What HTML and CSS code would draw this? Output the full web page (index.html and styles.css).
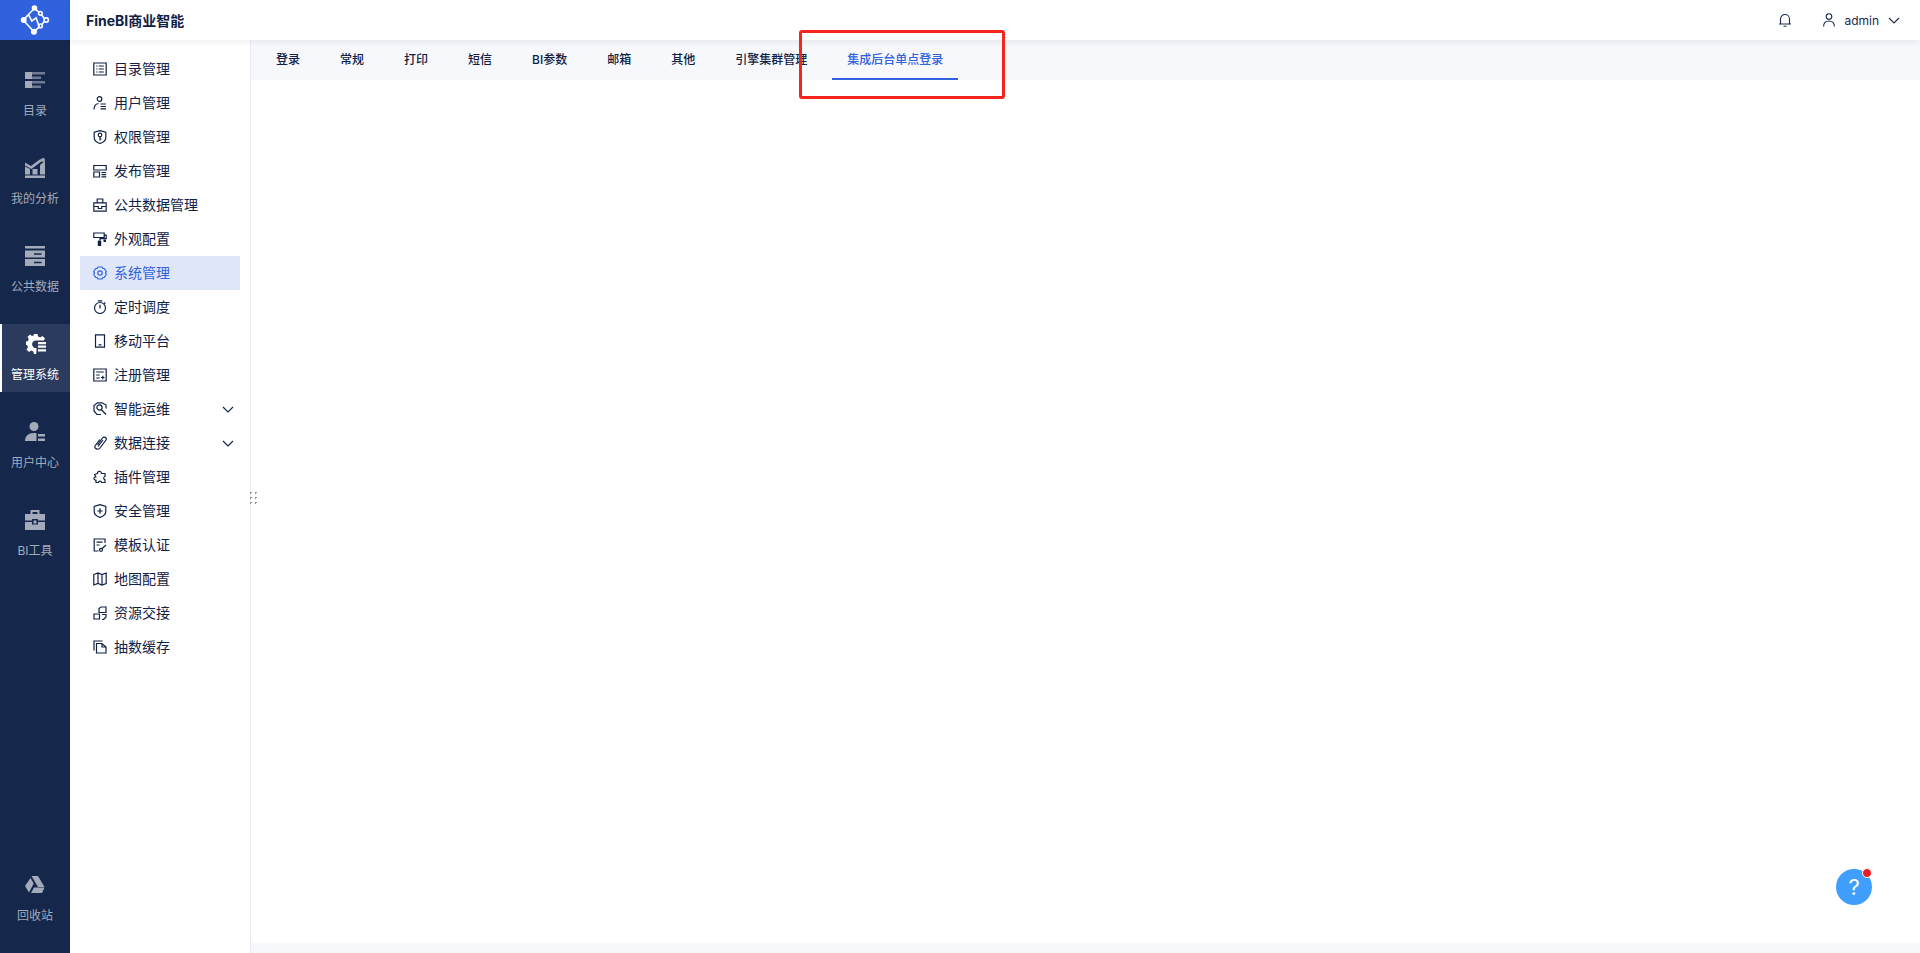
FILE: index.html
```html
<!DOCTYPE html>
<html>
<head>
  <title>FineBI商业智能</title>
  <link rel="stylesheet" href="styles.css">
</head>
<body>
  <div class="rail">
    <div class="logo">
      <svg width="30" height="30" viewBox="0 0 28 28" fill="none" stroke="#fff" stroke-width="1.500">
        <path d="M3 14L13.500 3M3 14L13 25M13.500 3L18 7M3 14L8 9M13 25L18 20.500M8 9L11 15L15 12L18 20.500M20 9L23 13M20 19L23 15"/>
        <circle cx="3.500" cy="14" r="2.800" fill="#fff" stroke="none"/>
        <circle cx="13.500" cy="2.800" r="2.600" fill="#fff" stroke="none"/>
        <circle cx="13" cy="25" r="2.800" fill="#fff" stroke="none"/>
        <circle cx="24.500" cy="14" r="2"/>
        <circle cx="19" cy="7.800" r="1.700"/>
        <circle cx="19" cy="19.500" r="1.700"/>
      </svg>
    </div>
    <div class="rail-item">
      <svg class="rail-icon" viewBox="0 0 20 20"><path d="M0 2h7v7H0zM0 11h7v7H0z"/><path class="dim" d="M7 2h13v2.500H7zM7 6.500h9v2.500H7zM7 11h13v2.500H7zM7 15.500h9V18H7z"/></svg>
      <span>目录</span>
    </div>
    <div class="rail-item">
      <svg class="rail-icon" viewBox="0 0 20 20"><path d="M0 17.500h20V20H0zM0 8.500l5 2.500v5.500H0zM7.500 11h5v5.500h-5zM15 7l5-4v13.500h-5z"/><path d="M0 4.500L6 8 15.500 1l1.500 2L6.500 11 0 7.500z"/><circle cx="18" cy="2" r="2"/></svg>
      <span>我的分析</span>
    </div>
    <div class="rail-item">
      <svg class="rail-icon" viewBox="0 0 20 20"><path d="M0 0h20v2.500H0zM0 4.500h20v7H0zM0 13h20v7H0z"/><path class="cut" d="M9 7.200h7.500v1.500H9zM9 15.800h7.500v1.500H9z"/></svg>
      <span>公共数据</span>
    </div>
    <div class="rail-item active">
      <svg class="rail-icon" viewBox="0 0 20 20"><path d="M8 0h3.500l.7 2.600 2 .8L16.500 2l2.500 2.500-1.200 2H10.500a3.800 3.800 0 1 0 0 7.500V17.500l-.5 2.500H8l-.7-2.600-2-.8L3 18l-2.500-2.500L2 13.200l-.8-2L-.5 10.500v-3L2 7l.8-2L1.500 3 4 .5 6 2l1.500-.5z"/><path d="M12 8h8v2.200h-8zM12 11.600h8v2.200h-8zM12 15.200h8v2.200h-8z"/></svg>
      <span>管理系统</span>
    </div>
    <div class="rail-item">
      <svg class="rail-icon" viewBox="0 0 20 20"><circle cx="9" cy="4.500" r="4.500"/><path d="M0 19c0-5 3-8 9-8 1 0 2 .1 2.500.3V19zM13 12h7v2.500h-7zM13 16.500h7V19h-7z"/></svg>
      <span>用户中心</span>
    </div>
    <div class="rail-item">
      <svg class="rail-icon" viewBox="0 0 20 20"><path d="M5.500 4V0h9v4h-2V2h-5v2zM0 4h20v6.500h-7V9H7v1.500H0zM0 12h7v2.500h6V12h7v8H0z"/><path d="M8.500 10.500h3v3h-3z"/></svg>
      <span>BI工具</span>
    </div>
    <div class="rail-item bottom">
      <svg class="rail-icon" viewBox="0 0 20 20"><path d="M6.500 1h6.500l6.500 11h-6.500zM5.500 3l3.200 5.500-4.700 9L0 11zM9 12.500h10.500L17 18H6z"/></svg>
      <span>回收站</span>
    </div>
  </div>

  <div class="main">
    <div class="header">
      <p class="title">FineBI商业智能</p>
      <div class="header-right">
        <svg class="bell" width="14" height="14" viewBox="0 0 14 14" fill="none" stroke="#1a2b4d" stroke-width="1.100"><path d="M1 11h12M2.500 11V6a4.500 4.500 0 0 1 9 0v5M5.500 13.300h3"/></svg>
        <div class="user">
          <svg width="12" height="14" viewBox="0 0 12 14" fill="none" stroke="#1a2b4d" stroke-width="1.100"><circle cx="6" cy="3.500" r="2.800"/><path d="M.6 13.500c0-3.500 2.200-5.500 5.400-5.500s5.400 2 5.400 5.500"/></svg>
          <span>admin</span>
          <svg width="12" height="7" viewBox="0 0 12 7" fill="none" stroke="#1a2b4d" stroke-width="1.100"><path d="M1 1l5 5 5-5"/></svg>
        </div>
      </div>
    </div>

    <div class="body">
      <div class="side">
        <div class="menu-item">
          <svg class="menu-icon" viewBox="0 0 14 14"><path d="M.8 1h12.400v12H.8zM3.200 4h1.300M5.800 4h5M3.200 7h1.300M5.800 7h5M3.200 10h1.300M5.800 10h5"/></svg>
          <span>目录管理</span>
        </div>
        <div class="menu-item">
          <svg class="menu-icon" viewBox="0 0 14 14"><circle cx="6.500" cy="3" r="2.300"/><path d="M1 13.500c0-3.500 1.500-5.500 4.500-6M7.500 8h5.500M7.500 10.500h5.500M7.500 12.800h5.500"/></svg>
          <span>用户管理</span>
        </div>
        <div class="menu-item">
          <svg class="menu-icon" viewBox="0 0 14 14"><path d="M7 .6l5.800 1.600v5.600c0 2.800-2.700 4.700-5.800 5.700-3.100-1-5.800-2.900-5.800-5.700V2.200z"/><circle cx="7" cy="5" r="1.800"/><path d="M7 6.800v3.700M7 9h1.500"/></svg>
          <span>权限管理</span>
        </div>
        <div class="menu-item">
          <svg class="menu-icon" viewBox="0 0 14 14"><path d="M.8 1.500h12.400v4.500H.8zM.8 8h5.700v5H.8zM8.500 8.500h4.700M8.500 10.700h4.700M8.500 12.900h4.700"/></svg>
          <span>发布管理</span>
        </div>
        <div class="menu-item">
          <svg class="menu-icon" viewBox="0 0 14 14"><path d="M.8 4.800h12.400v8.400H.8zM4.200 4.800V1h5.600v3.800M.8 8.500h4.500v2h3.400v-2h4.500"/></svg>
          <span>公共数据管理</span>
        </div>
        <div class="menu-item">
          <svg class="menu-icon" viewBox="0 0 14 14"><path d="M.8 1h10.400v4.500H.8zM11.200 3.200h2v3.500H7v1.500"/><path class="solid" d="M4.800 8.500h3.400V14H4.800zM10.500 7.500h2.500V10h-2.500z"/></svg>
          <span>外观配置</span>
        </div>
        <div class="menu-item active">
          <svg class="menu-icon" viewBox="0 0 14 14"><path d="M5 1h4l.8 1.500 1.700.2 1.800 3L12.500 7l.8 1.300-1.800 3-1.700.2L9 13H5l-.8-1.500-1.700-.2-1.800-3L1.500 7 .7 5.700l1.800-3 1.700-.2z" stroke-linejoin="round"/><circle cx="7" cy="7" r="2.200"/></svg>
          <span>系统管理</span>
        </div>
        <div class="menu-item">
          <svg class="menu-icon" viewBox="0 0 14 14"><circle cx="7" cy="8" r="5.500"/><path d="M4.800 .8h4.400M7 4.800v3.700M11 2.500l1.300 1.300"/></svg>
          <span>定时调度</span>
        </div>
        <div class="menu-item">
          <svg class="menu-icon" viewBox="0 0 14 14"><path d="M2.500.8h9v12.400h-9zM5.500 10.800h3"/></svg>
          <span>移动平台</span>
        </div>
        <div class="menu-item">
          <svg class="menu-icon" viewBox="0 0 14 14"><path d="M.8 1h12.400v12H.8zM3.200 4h7.600M3.200 7h3.500M3.200 10h3.500M8 9.500h3.500M9.800 7.800v3.500"/></svg>
          <span>注册管理</span>
        </div>
        <div class="menu-item">
          <svg class="menu-icon" viewBox="0 0 14 14"><path d="M13 6.500V3L9 .8H4.500L1 3.500V9l3 3.500h4"/><circle cx="6.500" cy="5.500" r="2.600"/><path d="M8.200 7.500l4.800 5"/></svg>
          <span>智能运维</span>
          <svg class="chevron" width="12" height="7" viewBox="0 0 12 7"><path d="M1 1l5 5 5-5"/></svg>
        </div>
        <div class="menu-item">
          <svg class="menu-icon" viewBox="0 0 14 14"><path d="M4.500 9L9.500 2c1.500-2 4.700-.3 3.500 2L7 12c-1.800 2.400-6 .7-5-2L6.800 3.500M5 10.500l5-6.500"/></svg>
          <span>数据连接</span>
          <svg class="chevron" width="12" height="7" viewBox="0 0 12 7"><path d="M1 1l5 5 5-5"/></svg>
        </div>
        <div class="menu-item">
          <svg class="menu-icon" viewBox="0 0 14 14"><path d="M4.500 3.500C4 .8 8.500.5 8.500 3.500H12v3c-1.500 0-1.800 3 0 3v3H8.500c0-1.800-3-1.800-3 0H3V10C.3 10.500.3 6.500 3 7L1.500 4.500z" stroke-linejoin="round"/></svg>
          <span>插件管理</span>
        </div>
        <div class="menu-item">
          <svg class="menu-icon" viewBox="0 0 14 14"><path d="M7 .6l5.800 1.800v5c0 2.900-2.700 4.900-5.800 6-3.100-1.100-5.800-3.100-5.800-6v-5zM7 4.300v5.400M4.300 7h5.400"/></svg>
          <span>安全管理</span>
        </div>
        <div class="menu-item">
          <svg class="menu-icon" viewBox="0 0 14 14"><path d="M12 5V1H1.200v12H5.500M3.500 4.200h6M3.500 7h3M8.700 11l4.300-4"/><circle cx="8" cy="11.800" r="1.500"/></svg>
          <span>模板认证</span>
        </div>
        <div class="menu-item">
          <svg class="menu-icon" viewBox="0 0 14 14"><path d="M.8 2.500L5 1l4 1.500L13.200 1v10.500L9 13l-4-1.500L.8 13zM5 1v10.500M9 2.500V13"/></svg>
          <span>地图配置</span>
        </div>
        <div class="menu-item">
          <svg class="menu-icon" viewBox="0 0 14 14"><path d="M6 6.500V2.500L8 1h5v5.500zM1 8h5.500v5H1zM9 8.500h4V11l-2.500 2.500H9"/></svg>
          <span>资源交接</span>
        </div>
        <div class="menu-item">
          <svg class="menu-icon" viewBox="0 0 14 14"><path d="M1 10.500V1h8.500M3.500 3.500H9l4 3.500v6H3.500zM9 3.500V7h4"/></svg>
          <span>抽数缓存</span>
        </div>
      </div>

      <div class="content">
        <div class="tabs">
          <div class="tab">登录</div>
          <div class="tab">常规</div>
          <div class="tab">打印</div>
          <div class="tab">短信</div>
          <div class="tab">BI参数</div>
          <div class="tab">邮箱</div>
          <div class="tab">其他</div>
          <div class="tab">引擎集群管理</div>
          <div class="tab active">集成后台单点登录</div>
        </div>
        <div class="pane"></div>
        <div class="bottom-strip"></div>
      </div>
    </div>
  </div>

  <div class="drag-handle"></div>
  <div class="red-mark"></div>
  <div class="help">?<span class="help-dot"></span></div>
</body>
</html>
```

FILE: styles.css
```css
html,
body {
  height: 100%;
}

body {
  margin: 0;
  display: flex;
  overflow: hidden;
  font-family: Inter, "Noto Sans CJK SC", sans-serif;
  color: #0f2145;
  background-color: #fff;
}

.rail {
  width: 70px;
  flex-shrink: 0;
  display: flex;
  flex-direction: column;
  align-items: stretch;
  background-color: #15274a;
}

.logo {
  height: 40px;
  display: flex;
  align-items: center;
  justify-content: center;
  margin-bottom: 20px;
  background-color: #2f62dc;
}

.rail-item {
  height: 68px;
  box-sizing: border-box;
  padding-top: 10px;
  margin-bottom: 20px;
  display: flex;
  flex-direction: column;
  align-items: center;
  font-size: 12px;
  line-height: 20px;
  color: #a3abba;
}

.rail-item span {
  margin-top: 11px;
}

.rail-item.active {
  background-color: #2b3b5e;
  border-left: 2px solid #fff;
  color: #fff;
}

.rail-item.active span {
  margin-left: -2px;
}

.rail-item.bottom {
  margin-top: auto;
}

.rail-icon {
  width: 20px;
  height: 20px;
  fill: currentColor;
}

.rail-icon .dim {
  opacity: 0.65;
}

.rail-icon .cut {
  fill: #15274a;
}

.main {
  flex: 1;
  min-width: 0;
  display: flex;
  flex-direction: column;
}

.header {
  height: 40px;
  flex-shrink: 0;
  display: flex;
  align-items: center;
  justify-content: space-between;
  padding: 0 20px 0 16px;
  background-color: #fff;
  box-shadow: 0 2px 6px rgba(20, 40, 80, 0.08);
  position: relative;
  z-index: 2;
}

.title {
  margin: 0;
  font-size: 14px;
  font-weight: 700;
}

.header-right {
  display: flex;
  align-items: center;
  gap: 31px;
}

.user {
  display: flex;
  align-items: center;
  gap: 9px;
  font-size: 12px;
  color: #1a2b4d;
}

.body {
  flex: 1;
  min-height: 0;
  display: flex;
}

.side {
  width: 181px;
  flex-shrink: 0;
  box-sizing: border-box;
  padding: 12px 10px 0;
  border-right: 1px solid #eaecf2;
}

.menu-item {
  height: 34px;
  display: flex;
  align-items: center;
  gap: 7px;
  padding: 0 6px 0 13px;
  font-size: 14px;
}

.menu-item span {
  margin-top: -2px;
}

.menu-item.active {
  background-color: #dfe6f9;
  color: #2f62dc;
}

.menu-icon {
  width: 14px;
  height: 14px;
  flex-shrink: 0;
  fill: none;
  stroke: currentColor;
  stroke-width: 1.200;
}

.menu-icon .solid {
  fill: currentColor;
  stroke: none;
}

.chevron {
  margin-left: auto;
  fill: none;
  stroke: currentColor;
  stroke-width: 1.100;
}

.content {
  flex: 1;
  min-width: 0;
  display: flex;
  flex-direction: column;
}

.tabs {
  height: 40px;
  flex-shrink: 0;
  display: flex;
  padding-left: 5px;
  background-color: #f7f8fc;
}

.tab {
  padding: 0 20px;
  font-size: 12px;
  font-weight: 500;
  line-height: 40px;
  position: relative;
}

.tab.active {
  color: #2f62dc;
}

.tab.active::after {
  content: "";
  position: absolute;
  left: 5px;
  right: 5px;
  bottom: 0;
  height: 2px;
  background-color: #2f62dc;
}

.pane {
  flex: 1;
  background-color: #fff;
}

.bottom-strip {
  height: 10px;
  background-color: #f7f8fc;
}

.drag-handle {
  position: absolute;
  left: 248px;
  top: 490px;
  width: 10px;
  height: 15px;
  background-image: radial-gradient(circle, #8a93a6 1px, transparent 1px);
  background-size: 5px 5px;
}

.red-mark {
  position: absolute;
  z-index: 3;
  left: 799px;
  top: 30px;
  width: 206px;
  height: 69px;
  box-sizing: border-box;
  border: 3px solid #f5251d;
  border-radius: 3px;
}

.help {
  position: absolute;
  left: 1836px;
  top: 869px;
  width: 36px;
  height: 36px;
  border-radius: 50%;
  background-color: #409eff;
  color: #fff;
  font-size: 22px;
  line-height: 36px;
  text-align: center;
}

.help-dot {
  position: absolute;
  right: 0;
  top: -1px;
  width: 8px;
  height: 8px;
  border-radius: 50%;
  border: 1px solid #fff;
  background-color: #ee1c24;
}
```
